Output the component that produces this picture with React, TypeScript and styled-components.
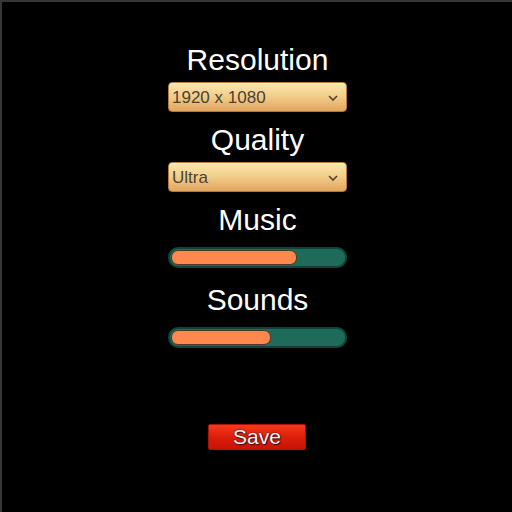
import { FC } from "react";
import styled, { createGlobalStyle } from "styled-components";

const GlobalStyle = createGlobalStyle`
  html, body {
    margin: 0;
    padding: 0;
    background: #000;
  }
  body {
    font-family: "Liberation Sans", Arial, sans-serif;
  }
`;

const Screen = styled.div`
  box-sizing: border-box;
  width: 512px;
  height: 512px;
  background: #000;
  border-left: 2px solid #363636;
  border-top: 2px solid #363636;
  padding-top: 42px;
  padding-left: 1px;
  display: flex;
  flex-direction: column;
  align-items: center;
`;

const Section = styled.div`
  width: 179px;
  height: 80px;
  display: flex;
  flex-direction: column;
  align-items: center;
`;

const Label = styled.div`
  height: 32px;
  line-height: 32px;
  font-size: 30px;
  color: #fff;
  white-space: nowrap;
  margin-bottom: 6px;
`;

const ControlRow = styled.div`
  width: 100%;
  height: 30px;
  display: flex;
  align-items: center;
`;

const Dropdown = styled.div`
  box-sizing: border-box;
  width: 100%;
  height: 30px;
  border: 1px solid #b77a35;
  border-radius: 4px;
  background: linear-gradient(#fbe6ae 0%, #f3cf8c 45%, #e2a660 100%);
  box-shadow: inset 0 1px 0 rgba(255, 250, 220, 0.7);
  display: flex;
  align-items: center;
  justify-content: space-between;
  padding: 1px 8px 0 3px;
  color: #4a4238;
  font-size: 17px;
`;

const Track = styled.div`
  box-sizing: border-box;
  width: 100%;
  height: 21px;
  border: 2px solid #10443a;
  border-radius: 10px;
  background: #1f6b5a;
  padding: 1px;
  display: flex;
`;

const Fill = styled.div<{ $value: number }>`
  box-sizing: border-box;
  width: ${(p) => p.$value}%;
  height: 100%;
  border: 1px solid #4a3a26;
  border-radius: 7px;
  background: #ff884d;
`;

const Spacer = styled.div`
  height: 60px;
`;

const SaveButton = styled.button`
  box-sizing: border-box;
  width: 98px;
  height: 26px;
  margin-right: 1px;
  border: 1px solid #a81208;
  border-radius: 2px;
  background: linear-gradient(#f23a1c, #dc1c0a 55%, #c81406);
  color: #f2f2f2;
  font-family: "Liberation Sans", Arial, sans-serif;
  font-size: 21px;
  line-height: 24px;
  padding: 0;
  text-shadow: 0 0 2px #3a1010, 1px 1px 1px #3a1010;
`;

const Chevron: FC = () => (
  <svg width="10" height="6" viewBox="0 0 10 6">
    <polyline points="1,1 5,5 9,1" fill="none" stroke="#4a4238" strokeWidth="1.6" />
  </svg>
);

const SelectField: FC<{ label: string; value: string }> = ({ label, value }) => (
  <Section>
    <Label>{label}</Label>
    <ControlRow>
      <Dropdown>
        <span>{value}</span>
        <Chevron />
      </Dropdown>
    </ControlRow>
  </Section>
);

const SliderField: FC<{ label: string; value: number }> = ({ label, value }) => (
  <Section>
    <Label>{label}</Label>
    <ControlRow>
      <Track>
        <Fill $value={value} />
      </Track>
    </ControlRow>
  </Section>
);

const App: FC = () => {
  return (
    <>
      <GlobalStyle />
      <Screen>
        <SelectField label="Resolution" value="1920 x 1080" />
        <SelectField label="Quality" value="Ultra" />
        <SliderField label="Music" value={73} />
        <SliderField label="Sounds" value={58} />
        <Spacer />
        <SaveButton>Save</SaveButton>
      </Screen>
    </>
  );
};

export default App;
